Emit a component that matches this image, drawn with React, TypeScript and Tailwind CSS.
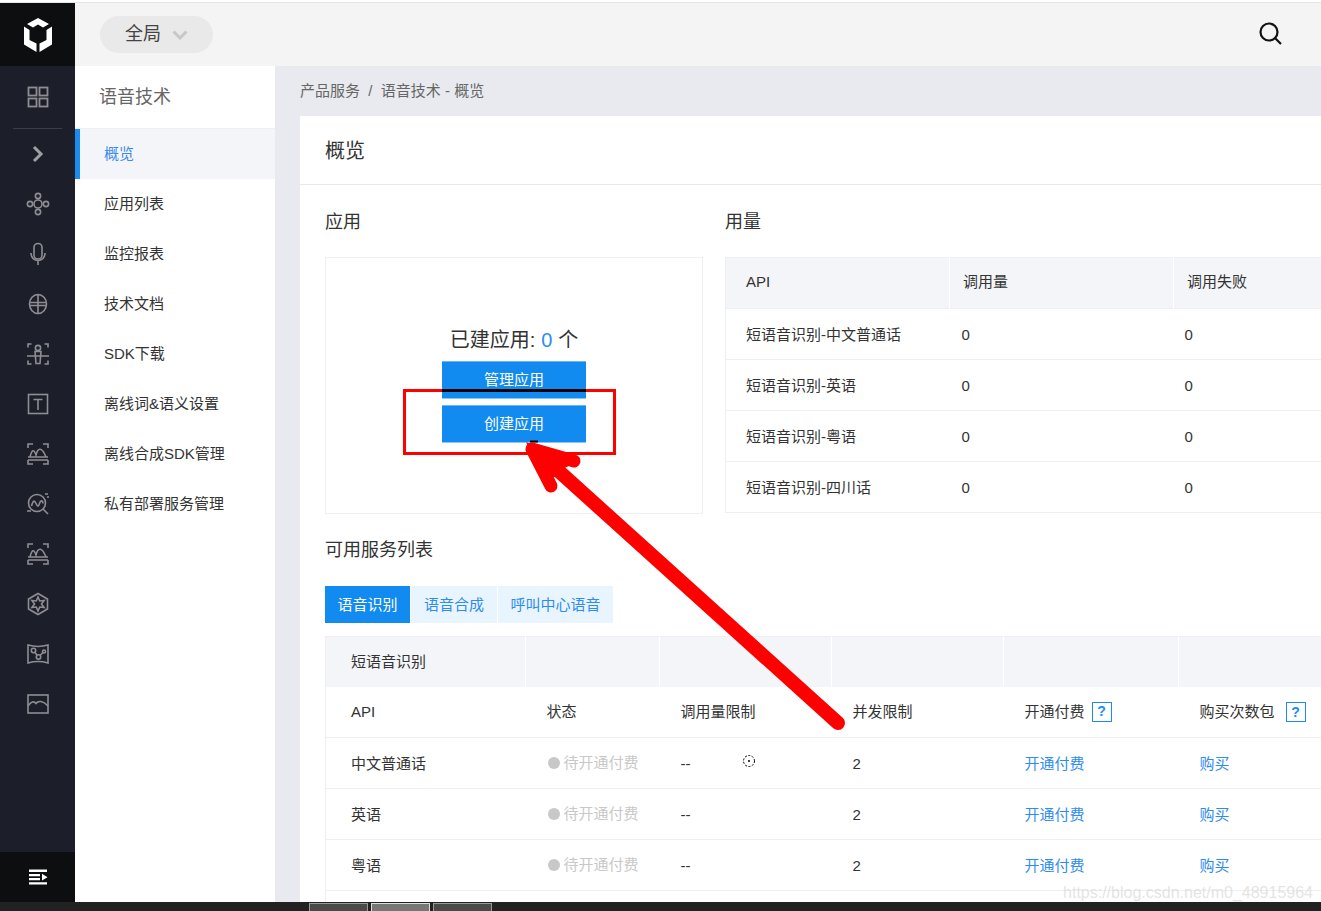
import React from "react";

const FONT = "[font-family:'Liberation_Sans','Noto_Sans_CJK_SC',sans-serif]";

function RailIcon({ children }: { children: React.ReactNode }) {
  return (
    <div className="flex h-[50px] items-center justify-center">
      <svg width="24" height="24" viewBox="0 0 24 24" fill="none" stroke="#8e8e92" strokeWidth="1.6">
        {children}
      </svg>
    </div>
  );
}

const Peaks = () => (
  <>
    <path d="M2 6V2h5M17 2h5v4M2 18v4h5M17 22h5v-4" />
    <path d="M2 15h20M2 18h20" />
    <path d="M4 15c2-8 4-8 6-2 2-8 6-8 10 2" />
  </>
);

const railIcons: React.ReactNode[] = [
  <>
    <circle cx="12" cy="12" r="4" />
    <circle cx="12" cy="4" r="2.6" />
    <circle cx="12" cy="20" r="2.6" />
    <circle cx="4" cy="12" r="2.6" />
    <circle cx="20" cy="12" r="2.6" />
  </>,
  <>
    <rect x="8" y="1.500" width="8" height="15.500" rx="4" />
    <path d="M5 11c0 10 14 10 14 0M12 18.500V23" />
  </>,
  <>
    <ellipse cx="12" cy="12" rx="8.500" ry="9.500" />
    <path d="M12 2.500v19M3.500 10.500h17M3.500 13.500h17" />
  </>,
  <>
    <path d="M2 5.500V2h3.500M18.500 2H22v3.500M2 18.500V22h3.500M18.500 22H22v-3.500" />
    <circle cx="12" cy="6" r="2.600" />
    <path d="M9 9.500h6l-1 12h-4zM1 14h22" />
  </>,
  <>
    <rect x="2.500" y="2.500" width="19" height="19" />
    <path d="M7.500 7.500h9M12 7.500V18" />
  </>,
  <Peaks />,
  <>
    <circle cx="11" cy="11" r="8.500" />
    <path d="M5.500 14c1.500-6 3-6 4.500-2.500s2.500 3.500 3.500 0 3-3.500 3.500 0M17 17l5 5M19 2h3M21 5h2M1 19h4" />
  </>,
  <Peaks />,
  <>
    <path d="M12 1.500 21.500 7v10L12 22.500 2.500 17V7z" />
    <path d="M12 5 13.750 8.970 18.100 8.500 15.500 12 18.100 15.500 13.750 15.030 12 19 10.250 15.030 5.900 15.500 8.500 12 5.900 8.500 10.250 8.970z" />
  </>,
  <>
    <path d="M2 3c7 2 13 2 20 0v18c-7-2-13-2-20 0z" />
    <circle cx="7.500" cy="8.500" r="2.200" />
    <circle cx="12.500" cy="15" r="2.200" />
    <circle cx="18" cy="9.500" r="1.500" />
    <path d="m9 10.500 2.200 2.800M14 13.500l3-3" />
  </>,
  <>
    <rect x="2" y="3" width="20" height="18" />
    <path d="M2 14c3-5 6-5 8-2.500 2-3 7-3 12 2.500" />
    <path d="M8 14h.1M15 14h.1" />
  </>,
];

const sideItems = ["应用列表", "监控报表", "技术文档", "SDK下载", "离线词&语义设置", "离线合成SDK管理", "私有部署服务管理"];

const usageRows = ["短语音识别-中文普通话", "短语音识别-英语", "短语音识别-粤语", "短语音识别-四川话"];

const serviceRows = ["中文普通话", "英语", "粤语"];

function Help() {
  return (
    <span className="ml-[7px] inline-flex h-5 w-5 items-center justify-center border border-[#1a8cf0] text-[14px] font-bold text-[#1a8cf0]">
      ?
    </span>
  );
}

export default function App() {
  return (
    <div className={`relative flex h-[911px] w-[1321px] flex-col overflow-hidden bg-white text-[15px] text-[#333] ${FONT}`}>
      <div className="h-[3px] shrink-0 border-b border-[#e6e6e8]" />

      <div className="flex min-h-0 flex-1">
        {/* Icon rail */}
        <aside className="flex w-[75px] shrink-0 flex-col bg-[#1c1e2a]">
          <div className="flex h-[63px] shrink-0 items-center justify-center bg-[#0d0e10]">
            <svg width="30" height="34" viewBox="0 0 30 34" fill="#fff">
              <path d="M15 0 26 6l-6 3.500-5-3-5 3-6-3.500z" />
              <path d="M1 8.500 6.500 12v10l7 3.500v8.500L1 26.500z" />
              <path d="M29 8.500 23.500 12v10l-7 3.500v8.500L29 26.500z" />
            </svg>
          </div>
          <div className="flex h-[62px] shrink-0 items-center justify-center">
            <svg width="24" height="24" viewBox="0 0 24 24" fill="none" stroke="#8e8e92" strokeWidth="1.8">
              <rect x="2.500" y="2.500" width="8" height="8" />
              <rect x="13.500" y="2.500" width="8" height="8" />
              <rect x="2.500" y="13.500" width="8" height="8" />
              <rect x="13.500" y="13.500" width="8" height="8" />
            </svg>
          </div>
          <div className="mx-[13px] h-px shrink-0 bg-[#3b3d49]" />
          <div className="flex h-[50px] shrink-0 items-center justify-center">
            <svg width="24" height="24" viewBox="0 0 24 24" fill="none" stroke="#a0a0a4" strokeWidth="3">
              <path d="m8 5 7 7-7 7" />
            </svg>
          </div>
          {railIcons.map((icon, i) => (
            <RailIcon key={i}>{icon}</RailIcon>
          ))}
          <div className="mt-auto flex h-[50px] shrink-0 items-center justify-center bg-[#0d0e10]">
            <svg width="20" height="16" viewBox="0 0 20 16" fill="#fff">
              <path d="M1 .500h18V3H1zM1 5h11v2.300H1zM1 9h11v2.300H1zM1 13.200h18v2.300H1zM14 4.800l5.500 3.400L14 11.500z" />
            </svg>
          </div>
        </aside>

        <div className="flex min-w-0 flex-1 flex-col">
          {/* Header */}
          <header className="flex h-[63px] shrink-0 items-center justify-between bg-[#f4f4f4] pl-[25px] pr-[39px]">
            <div className="flex h-[37px] w-[113px] items-center rounded-full bg-[#e9e9e9] pl-[25px] text-[18px] text-[#444]">
              全局
              <svg className="ml-[11px]" width="16" height="10" viewBox="0 0 16 10" fill="none" stroke="#c8c8c8" strokeWidth="3">
                <path d="m1.500 1.500 6.500 6.500 6.500-6.500" />
              </svg>
            </div>
            <svg className="mb-[4px]" width="24" height="24" viewBox="0 0 24 24" fill="none" stroke="#111" strokeWidth="2.2">
              <circle cx="11" cy="11" r="8.500" />
              <path d="m17 17 6 6" />
            </svg>
          </header>

          <div className="flex min-h-0 flex-1">
            {/* Secondary nav */}
            <nav className="w-[200px] shrink-0 bg-white">
              <div className="flex h-[63px] items-center border-b border-[#eef0f4] pl-[24px] text-[18px] text-[#666]">语音技术</div>
              <div className="flex h-[50px] items-center border-l-[5px] border-[#1a8cf0] bg-[#f4f5f9] pl-6 text-[#3a8af0]">概览</div>
              {sideItems.map((s) => (
                <div key={s} className="flex h-[50px] items-center pl-[29px]">
                  {s}
                </div>
              ))}
            </nav>

            {/* Content */}
            <main className="min-w-0 flex-1 overflow-hidden bg-[#e8eaef] pl-[25px]">
              <div className="flex h-[50px] items-center text-[#666]">产品服务&nbsp;&nbsp;/&nbsp;&nbsp;语音技术 - 概览</div>
              <div className="h-full w-[1100px] bg-white">
                <div className="flex h-[69px] items-center border-b border-[#e8e8e8] pl-[25px] pt-[2px] text-[20px]">概览</div>
                <div className="px-[25px]">
                  <div className="flex gap-[22px]">
                    <section className="w-[378px] shrink-0">
                      <h2 className="flex h-[72px] items-center pt-[2px] text-[18px] font-normal">应用</h2>
                      <div className="flex h-[257px] flex-col items-center border border-[#eeeff2] pt-[69px]">
                        <div className="flex h-[26px] items-center text-[20px]">
                          已建应用: <span className="mx-[6px] text-[#2e8cf0]">0</span> 个
                        </div>
                        <button className="mt-[8px] h-[38px] w-[144px] border-y border-t-[#6fb5f5] border-b-[#8cc6f8] bg-[#118bf0] text-white">管理应用</button>
                        <button className="mt-[6px] h-[38px] w-[144px] border-y border-t-[#6fb5f5] border-b-[#8cc6f8] bg-[#118bf0] text-white">创建应用</button>
                      </div>
                    </section>
                    <section className="min-w-0 flex-1">
                      <h2 className="flex h-[72px] items-center pt-[2px] text-[18px] font-normal">用量</h2>
                      <table className="w-[680px] table-fixed border-collapse border border-[#eeeff2]">
                        <colgroup>
                          <col className="w-[224px]" />
                          <col className="w-[224px]" />
                          <col />
                        </colgroup>
                        <thead>
                          <tr className="h-[51px] bg-[#f4f5f9] text-left">
                            <th className="border-r border-white pb-[2px] pl-5 font-normal">API</th>
                            <th className="border-r border-white pb-[2px] pl-[13px] font-normal">调用量</th>
                            <th className="pb-[2px] pl-[13px] font-normal">调用失败</th>
                          </tr>
                        </thead>
                        <tbody>
                          {usageRows.map((r) => (
                            <tr key={r} className="h-[51px] border-t border-[#eeeff2]">
                              <td className="pl-5 pt-[2px]">{r}</td>
                              <td className="pl-[12px] pt-[2px]">0</td>
                              <td className="pl-[11px] pt-[2px]">0</td>
                            </tr>
                          ))}
                        </tbody>
                      </table>
                    </section>
                  </div>

                  <h2 className="mt-[14px] flex h-[44px] items-center text-[18px] font-normal">可用服务列表</h2>
                  <div className="mt-[14px] flex h-[37px] gap-px">
                    <div className="flex w-[85px] items-center justify-center bg-[#118bf0] pt-[1px] text-[15px] text-white">语音识别</div>
                    <div className="flex w-[86px] items-center justify-center bg-[#e8f5fe] pt-[1px] text-[15px] text-[#2e8cf0]">语音合成</div>
                    <div className="flex w-[115px] items-center justify-center bg-[#e8f5fe] pt-[1px] text-[15px] text-[#2e8cf0]">呼叫中心语音</div>
                  </div>

                  <table className="mt-[13px] w-[1040px] table-fixed border-collapse border-l border-t border-[#eeeff2]">
                    <colgroup>
                      <col className="w-[200px]" />
                      <col className="w-[134px]" />
                      <col className="w-[172px]" />
                      <col className="w-[172px]" />
                      <col className="w-[175px]" />
                      <col />
                    </colgroup>
                    <thead>
                      <tr className="h-[50px] bg-[#f4f5f9] text-left">
                        <th className="border-r border-white pl-[25px] font-normal">短语音识别</th>
                        <th className="border-r border-white" />
                        <th className="border-r border-white" />
                        <th className="border-r border-white" />
                        <th className="border-r border-white" />
                        <th />
                      </tr>
                      <tr className="h-[51px] border-b border-[#eeeff2] text-left">
                        <th className="pl-[25px] font-normal">API</th>
                        <th className="pl-[21px] font-normal">状态</th>
                        <th className="pl-[21px] font-normal">调用量限制</th>
                        <th className="pl-[21px] font-normal">并发限制</th>
                        <th className="pl-[21px] font-normal">
                          <span className="inline-flex items-center">
                            开通付费
                            <Help />
                          </span>
                        </th>
                        <th className="pl-[21px] font-normal">
                          <span className="inline-flex items-center">
                            购买次数包
                            <span className="ml-1">
                              <Help />
                            </span>
                          </span>
                        </th>
                      </tr>
                    </thead>
                    <tbody>
                      {serviceRows.map((r) => (
                        <tr key={r} className="h-[51px] border-b border-[#eeeff2]">
                          <td className="pl-[25px] pt-[2px]">{r}</td>
                          <td className="pl-[22px] pt-[2px] text-[#c8c8c8]">
                            <span className="inline-flex items-center gap-[4px]">
                              <span className="h-3 w-3 rounded-full bg-[#c8c8c8]" />
                              待开通付费
                            </span>
                          </td>
                          <td className="pl-[21px] pt-[2px]">--</td>
                          <td className="pl-[21px] pt-[2px]">2</td>
                          <td className="pl-[21px] pt-[2px] text-[#2e8cf0]">开通付费</td>
                          <td className="pl-[21px] pt-[2px] text-[#2e8cf0]">购买</td>
                        </tr>
                      ))}
                      <tr className="h-[51px]">
                        <td colSpan={6} />
                      </tr>
                    </tbody>
                  </table>
                </div>
              </div>
            </main>
          </div>
        </div>
      </div>

      {/* Window thumbnails strip */}
      <div className="flex h-[9px] shrink-0 gap-[3px] bg-[#222] pl-[309px] pt-px">
        <div className="h-full w-[59px] border-l border-r border-t border-[#999] bg-[#4a4a4a]" />
        <div className="h-full w-[59px] border-l border-r border-t border-[#ddd] bg-[#777]" />
        <div className="h-full w-[59px] border-l border-r border-t border-[#999] bg-[#4a4a4a]" />
      </div>

      {/* Hand-drawn annotations over the page */}
      <div className="absolute left-[403px] top-[389px] h-[66px] w-[213px] border-[3px] border-[#f00]" />
      <div className="absolute left-[442px] top-[389px] h-[3px] w-[144px] bg-black" />
      <svg className="pointer-events-none absolute left-0 top-0" width="1321" height="911" fill="none">
        <path d="M530 441.500h8" stroke="#000" strokeWidth="2" />
        <path d="M838 723 552 465" stroke="#f00" strokeWidth="14" strokeLinecap="round" />
        <path d="M532 449 551 486M532 449 574 461" stroke="#f00" strokeWidth="13" strokeLinecap="round" />
        <path d="M528 444 547 486 558 470 577 461z" fill="#f00" stroke="#f00" strokeWidth="2" />
        <circle cx="749" cy="761" r="5.500" stroke="#000" strokeDasharray="2 1.500" />
        <circle cx="749" cy="761" r="1" fill="#000" />
      </svg>
      <div className="absolute bottom-[6px] right-[8px] text-[16px] text-[#d8d8d8]/70">https://blog.csdn.net/m0_48915964</div>
    </div>
  );
}
